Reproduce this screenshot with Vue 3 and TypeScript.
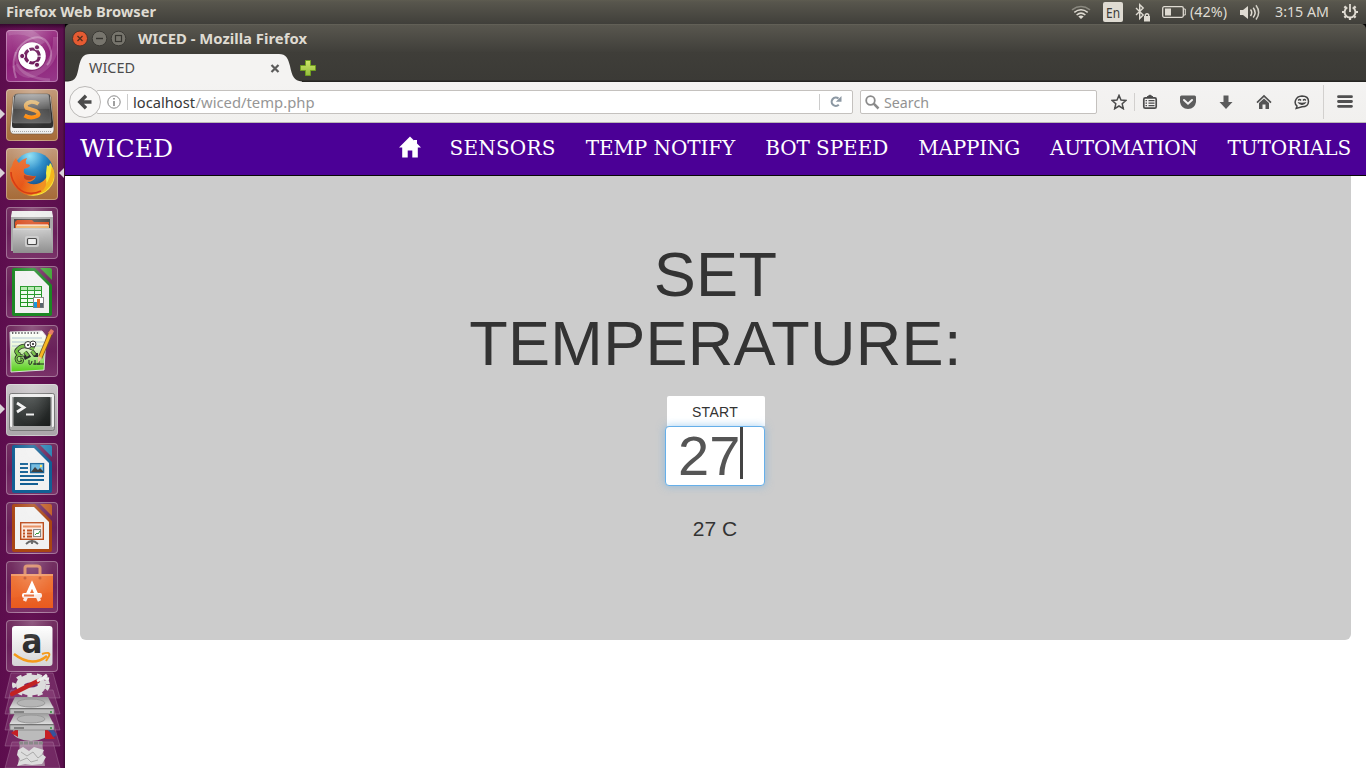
<script setup lang="ts">
import { ref } from 'vue'

interface Tile {
  id: string
  bg: string
  running?: boolean
  focused?: boolean
}

interface NavLink {
  label: string
  tracking: number
}

const tiles: Tile[] = [
  { id: 'dash', bg: 'dash' },
  { id: 'sublime', bg: 'tan', running: true },
  { id: 'firefox', bg: 'tan', running: true, focused: true },
  { id: 'files', bg: 'clear' },
  { id: 'calc', bg: 'clear' },
  { id: 'notepad', bg: 'clear' },
  { id: 'terminal', bg: 'grey', running: true },
  { id: 'writer', bg: 'clear' },
  { id: 'impress', bg: 'clear' },
  { id: 'software', bg: 'clear' },
  { id: 'amazon', bg: 'clear' },
]

const links: NavLink[] = [
  { label: 'SENSORS', tracking: 0.2 },
  { label: 'TEMP NOTIFY', tracking: -0.08 },
  { label: 'BOT SPEED', tracking: -0.07 },
  { label: 'MAPPING', tracking: -0.2 },
  { label: 'AUTOMATION', tracking: -0.24 },
  { label: 'TUTORIALS', tracking: -0.1 },
]
const temperature = ref<number>(27)
</script>

<template>
  <div class="desktop">
    <header class="panel">
      <svg class="ui bold" width="160" height="24"><text x="6" y="17" textLength="150" lengthAdjust="spacingAndGlyphs">Firefox Web Browser</text></svg>
      <div class="indicators">
        <svg width="20" height="24" viewBox="0 0 20 24" fill="none" stroke="#dfdbd2" stroke-width="1.5">
          <path d="M1 9.8Q10 3.2 19 9.8" opacity=".4" /><path d="M3.3 12.3Q10 7.3 16.7 12.3" /><path d="M5.6 15Q10 11.2 14.4 15" /><path d="M7.3 16.6Q10 14.4 12.7 16.6L10 19Z" fill="#dfdbd2" stroke="none" />
        </svg>
        <span class="lang"><svg class="ui" width="20" height="20"><text x="3" y="15.5" textLength="14" lengthAdjust="spacingAndGlyphs">En</text></svg></span>
        <svg class="bt" width="16" height="24" viewBox="0 0 16 24" fill="none" stroke="#dfdbd2" stroke-width="1.4">
          <path d="M1 8L8.2 15L4.7 18.5V4.7L8.2 8L1 15" /><rect x="9" y="16" width="6" height="5.5" fill="#dfdbd2" stroke="none" /><path d="M10.3 16V14.7Q12 12.7 13.7 14.7V16" />
        </svg>
        <svg class="battery" width="24" height="24" viewBox="0 0 24 24">
          <rect x=".7" y="6.7" width="20.6" height="10.6" rx="1.5" fill="none" stroke="#dfdbd2" stroke-width="1.3" /><rect x="3" y="8.5" width="6" height="7" fill="#dfdbd2" /><path d="M21.5 9H23.3V15H21.5" fill="none" stroke="#dfdbd2" />
        </svg>
        <svg class="ui percent" width="38" height="24"><text x="0" y="17" textLength="37" lengthAdjust="spacingAndGlyphs">(42%)</text></svg>
        <svg class="volume" width="22" height="24" viewBox="0 0 22 24" fill="none" stroke="#dfdbd2" stroke-width="1.5">
          <path d="M1 10H4L9 6V19L4 15H1Z" fill="#dfdbd2" stroke="none" /><path d="M11.5 9.5Q14 12.5 11.5 16" /><path d="M14.2 7.7Q18 12.5 14.2 17.5" /><path d="M17 5.2Q22.3 12.5 17 19.5" opacity=".9" />
        </svg>
        <svg class="ui clock" width="55" height="24"><text x="0" y="17" textLength="54" lengthAdjust="spacingAndGlyphs">3:15 AM</text></svg>
        <svg class="session" width="18" height="24" viewBox="0 0 18 24" fill="none" stroke="#dfdbd2">
          <path d="M6.3 7.4A5.4 5.4 0 1 0 11.7 7.4" stroke-width="1.9" /><path d="M9 4V12" stroke-width="1.8" /><path d="M3.4 6.4L5 8M14.6 6.4L13 8M1 12H3.5M14.5 12H17M3.4 17.6L5 16M14.6 17.6L13 16M9 17.5V20" stroke-width="2.2" />
        </svg>
      </div>
    </header>

    <div class="workspace">
      <aside class="launcher">
        <div v-for="tile in tiles" :key="tile.id" class="slot">
          <i v-if="tile.running" class="pip left"></i>
          <i v-if="tile.focused" class="pip right"></i>
          <div class="tile" :class="tile.bg">
            <svg v-if="tile.id === 'dash'" width="52" height="52" viewBox="0 0 52 52">
              <g fill="none" stroke="#fff"><path d="M10 48Q2 24 20 11Q39 0 45 21Q46 30 41 35" stroke-width="2" opacity=".28" /><path d="M2 2Q26 -3 36 14" stroke-width="7" opacity=".13" /><path d="M50 7Q51 33 30 43Q17 49 9 35" stroke-width="6" opacity=".13" /><path d="M10 22Q9 39 23 45Q31 49 44 50" stroke-width="3" opacity=".16" /></g>
              <circle cx="26" cy="26.5" r="14.5" fill="#611050" opacity=".35" /><circle cx="26" cy="26" r="13.8" fill="#fff" />
              <circle cx="26.3" cy="26" r="7" fill="none" stroke="#6b1458" stroke-width="3.2" stroke-dasharray="13.2 1.46" stroke-dashoffset="-.7" />
              <g fill="#6b1458" stroke="#fff" stroke-width="1"><circle cx="16.2" cy="26" r="2.6" /><circle cx="31" cy="17.3" r="2.6" /><circle cx="31" cy="34.8" r="2.6" /></g>
            </svg>

            <svg v-else-if="tile.id === 'sublime'" width="52" height="52" viewBox="0 0 52 52">
              <defs><linearGradient id="slKey" x2="0" y2="1"><stop stop-color="#a4a4a4" /><stop offset=".5" stop-color="#5c5c5c" /><stop offset=".51" stop-color="#484848" /><stop offset="1" stop-color="#626262" /></linearGradient><linearGradient id="slS" x2="0" y2="1"><stop stop-color="#ddb878" /><stop offset="1" stop-color="#ff8500" /></linearGradient></defs>
              <path d="M7 8Q8 5 11 5H41Q44 5 45 8L48 40Q48 45 44 45H8Q4 45 4 40Z" fill="#efefef" stroke="#6b543e" stroke-width=".6" /><path d="M6 42.5H46" stroke="#aaa" stroke-dasharray="1 1" />
              <path d="M8 7Q9 5 12 5H41Q44 5 44 7L47 33V37Q47 39 45 39H8Q6 39 6 37V33Z" fill="#303030" /><path d="M9 7Q10 5 12 5H41Q43 5 43 7L45 33Q45 34 43 34H9Q6 34 6 32Z" fill="url(#slKey)" stroke="#777" stroke-width=".5" />
              <path d="M32.5 15Q29 12.5 24.5 13Q18 14.5 20.5 18.8L30 22Q35 25 30.5 27.3Q24.5 30 18.5 26.5" fill="none" stroke="url(#slS)" stroke-width="3.9" />
            </svg>

            <svg v-else-if="tile.id === 'firefox'" width="52" height="52" viewBox="0 0 52 52">
              <defs><radialGradient id="ffGlobe" cx=".4" cy=".1" r=".9"><stop stop-color="#7ddcf4" /><stop offset=".4" stop-color="#1e86c6" /><stop offset="1" stop-color="#093b77" /></radialGradient><linearGradient id="ffFox" x2="1" y2=".5"><stop stop-color="#ef7530" /><stop offset=".55" stop-color="#e85718" /><stop offset="1" stop-color="#f19222" /></linearGradient></defs>
              <circle cx="27.5" cy="24" r="20" fill="url(#ffGlobe)" />
              <path d="M41 17Q43 20 44 15Q46 16 46 19Q52 31 43 41Q34 50 21 47Q35 44 38 36Q41 31 40 25Z" fill="#f7e83d" /><path d="M46 18Q50 25 47 33Q42 45 29 47Q41 38 44 28Z" fill="#f4b71d" />
              <path d="M6 18Q7 13 10 10Q11 13 13 15Q16 11 21 10Q19 13 20 16Q24 16 24 18Q22 20 18 21Q17 24 19 26Q23 28 30 28Q28 34 21 34Q26 38 34 35Q38 33 40 30Q42 39 35 44Q24 51 13 43Q2 34 4 21Z" fill="url(#ffFox)" /><path d="M18 27Q23 29 30 28Q27 33 21 32Q17 31 18 27Z" fill="#b83a18" /><path d="M5 24Q5 32 12 40Q22 49 35 43" fill="none" stroke="#d63d15" stroke-width="1.6" />
            </svg>

            <svg v-else-if="tile.id === 'files'" width="52" height="52" viewBox="0 0 52 52">
              <defs><linearGradient id="cabinet" x2="0" y2="1"><stop stop-color="#c9c9c9" /><stop offset="1" stop-color="#8f8f8f" /></linearGradient></defs>
              <path d="M7 4H45L47 10V44H5V10Z" fill="#aaa" /><path d="M6 4H46L47 10H5Z" fill="#ededed" /><rect x="8" y="12" width="36" height="11" fill="#4a4a4a" /><path d="M11 13H26L28 15H43V23H9V15Z" fill="#d94f20" /><path d="M10 18H43V23H10Z" fill="#efb46c" /><path d="M11 18H42" stroke="#fff" /><path d="M8 21H44V45H8Z" fill="#aaa" /><path d="M7 22H45L47 46H7Z" fill="url(#cabinet)" /><path d="M7 22H45" stroke="#dedede" />
              <rect x="19" y="29" width="14" height="11" rx="2" fill="#ccc" /><rect x="21.5" y="31.5" width="9" height="6" rx="1" fill="#eee" stroke="#444" stroke-width="1.2" />
            </svg>

            <svg v-else-if="tile.id === 'calc' || tile.id === 'writer' || tile.id === 'impress'" width="52" height="52" viewBox="0 0 52 52" :class="tile.id">
              <path class="shell" d="M8 2H29L46 19V48Q46 50 44 50H8Q6 50 6 48V4Q6 2 8 2Z" /><path d="M9 5H28L43 20V47H9Z" fill="#f1f1f1" /><path class="fold" d="M34 2H44Q46 2 46 4V14Z" />
              <template v-if="tile.id === 'calc'">
                <rect x="14" y="20" width="22" height="21" fill="#1d9420" /><g fill="#b5eaaf"><rect x="15" y="21" width="6" height="3" /><rect x="22" y="21" width="6" height="3" /><rect x="29" y="21" width="6" height="3" /></g><path d="M15 26.5H21M22 26.5H28M29 26.5H35M15 30.5H21M22 30.5H28M29 30.5H35M15 34.5H21M22 34.5H28M15 38.5H21M22 38.5H28" stroke="#effbee" stroke-width="2.8" />
                <rect x="27.5" y="31.5" width="10" height="10" fill="#fff" stroke="#838383" /><rect x="28" y="36" width="3" height="5.5" fill="#1598dc" /><rect x="31" y="33" width="3" height="8.5" fill="#e66a18" /><rect x="34" y="37" width="3" height="4.5" fill="#57656c" />
              </template>
              <template v-else-if="tile.id === 'writer'">
                <path d="M14 21H22M14 25H22M14 29H22M14 33H38M14 37H38M14 41H32" stroke="#125f94" stroke-width="2" /><rect x="24.6" y="20.6" width="13" height="9" fill="#69b7df" stroke="#125f94" stroke-width="1.3" /><path d="M25 29L29 24L32 27L34 25L37 28V29Z" fill="#333" /><circle cx="35" cy="23" r="1.2" fill="#ffe458" />
              </template>
              <template v-else>
                <rect x="14.7" y="20.7" width="22.6" height="16.6" fill="#fbe9df" stroke="#b94818" stroke-width="1.4" /><path d="M17 24.5H35" stroke="#e78a59" stroke-width="2" /><path d="M17 28.5H19M21 28.5H26M17 31.5H19M21 31.5H26M17 34.5H19M21 34.5H26" stroke="#b94818" stroke-width="2" /><rect x="27.6" y="27.6" width="7" height="7" fill="#fff" stroke="#777" /><path d="M29 33L31 31L32 32L34 29" fill="none" stroke="#289632" /><path d="M20 42Q26 36 32 42M26 38V42" fill="none" stroke="#666" stroke-width="1.8" />
              </template>
            </svg>

            <svg v-else-if="tile.id === 'notepad'" width="52" height="52" viewBox="0 0 52 52">
              <defs><linearGradient id="npPage" x2="0" y2="1"><stop stop-color="#fff" /><stop offset=".35" stop-color="#eef9db" /><stop offset="1" stop-color="#53cd17" /></linearGradient></defs>
              <path d="M4 7L36 6L40 11L38 45L5 47Z" fill="url(#npPage)" stroke="#ddd" /><path d="M6 13H36M6 17H38M6 21H38" stroke="#abc2d1" /><path d="M6 8H34" stroke="#666" stroke-width="2" stroke-dasharray="1.4 1.7" />
              <path d="M28 24Q17 18 12 24Q8 27 14 30M19 27L22 31L18 33M26 26L29 30H32" fill="none" stroke="#222" stroke-width="4.2" /><path d="M17 31Q10 29 10 34Q11 39 16 37Q18 34 14 34" fill="none" stroke="#222" stroke-width="2.8" /><path d="M28 24Q17 18 12 24Q8 27 14 30M19 27L22 31M26 26L29 30" fill="none" stroke="#70bd40" stroke-width="2.8" /><path d="M17 31Q10 29 10 34Q11 39 16 37Q18 34 14 34" fill="none" stroke="#70bd40" stroke-width="1.4" /><g fill="#fff" stroke="#222"><circle cx="22" cy="20" r="3.5" /><circle cx="27" cy="19" r="3" /></g><circle cx="22" cy="20" r="1" /><circle cx="27" cy="19" r="1" />
              <path d="M23 35V39Q25 41 26 36M29 35V40M27 39H32M33 36V40M31 39H38" stroke="#222" fill="none" /><path d="M45 7L34 33" stroke="#72501b" stroke-width="4.5" /><path d="M45 7L34 33" stroke="#f7b51a" stroke-width="3" /><path d="M45 4L48 6L46 10L42 8Z" fill="#e57b68" /><path d="M32 31L36 33L32 38Z" fill="#e4c89b" />
            </svg>

            <svg v-else-if="tile.id === 'terminal'" width="52" height="52" viewBox="0 0 52 52">
              <defs><linearGradient id="termScreen" x2="1" y2="1"><stop stop-color="#464c4b" /><stop offset=".5" stop-color="#303433" /><stop offset="1" stop-color="#191c1b" /></linearGradient></defs>
              <rect x="3.5" y="9.5" width="45" height="37" rx="2" fill="#aaa" stroke="#777" /><rect x="4" y="10" width="44" height="33" rx="1.5" fill="#eee" /><rect x="6" y="13" width="40" height="30" fill="#aaa" /><rect x="7.5" y="13" width="37" height="29" rx="1" fill="url(#termScreen)" /><path d="M11 19L18 23.5L11 28" fill="none" stroke="#f3f3f3" stroke-width="2.7" /><path d="M20 30.5H28" stroke="#eee" stroke-width="2" />
            </svg>

            <svg v-else-if="tile.id === 'software'" width="52" height="52" viewBox="0 0 52 52">
              <defs><linearGradient id="swBag" x2="0" y2="1"><stop stop-color="#ee793d" /><stop offset="1" stop-color="#ec5d20" /></linearGradient></defs>
              <path d="M19 16V7Q19 5 21 5H31Q34 5 34 7V16" fill="none" stroke="#d98762" stroke-width="3" /><path d="M5 13H47V47H5Z" fill="url(#swBag)" /><path d="M5 13H47V15H5Z" fill="#f19a68" /><g fill="#c0522b"><circle cx="19" cy="17" r="1.5" /><circle cx="34" cy="17" r="1.5" /></g><path d="M18.5 40L26 23.5L33.5 40" fill="none" stroke="#fff" stroke-width="3.5" /><rect x="16" y="32" width="20" height="5" rx="2" fill="#fff" /><path d="M18 34.5H28" stroke="#e97442" stroke-width="2" /><path d="M5 37L47 31V47H5Z" fill="#d84a19" opacity=".12" />
            </svg>

            <svg v-else width="52" height="52" viewBox="0 0 52 52">
              <defs><linearGradient id="amazonCard" x2="0" y2="1"><stop stop-color="#fff" /><stop offset="1" stop-color="#d5d5d5" /></linearGradient></defs>
              <rect x="6" y="6" width="40.5" height="40" rx="3" fill="url(#amazonCard)" /><text x="15.5" y="33" class="amazon-a" textLength="21" lengthAdjust="spacingAndGlyphs">a</text><path d="M8 34Q26 48 41 36" fill="none" stroke="#f59a1a" stroke-width="2.5" /><path d="M36 34Q45 31 43 36L40 41" fill="none" stroke="#f59a1a" stroke-width="2" />
            </svg>
            <span class="sheen"></span>
          </div>
        </div>
        <svg class="stack" width="65" height="96" viewBox="0 0 65 96">
          <defs><linearGradient id="drive" x2="0" y2="1"><stop stop-color="#999" /><stop offset=".65" stop-color="#ddd" /><stop offset=".67" stop-color="#777" /><stop offset="1" stop-color="#aaa" /></linearGradient></defs>
          <g fill="#a56594" fill-opacity=".3" stroke="#b184a7" stroke-opacity=".4"><path d="M11 1H53L60 26H5Z" /><path d="M11 18H53L60 42H5Z" /><path d="M11 34H53L60 58H5Z" /><path d="M11 50H53L60 74H5Z" /><path d="M12 70H53L60 96H5Z" /></g>
          <ellipse cx="31" cy="13" rx="11" ry="6.5" fill="none" stroke="#dcdcdc" stroke-width="8" /><ellipse cx="31" cy="13" rx="17" ry="10" fill="none" stroke="#dcdcdc" stroke-width="4" stroke-dasharray="5 5" /><path d="M12 22L38 9" stroke="#c22222" stroke-width="4.2" stroke-linecap="round" /><path d="M37 9L43 6L47 3M43 6L49 7" fill="none" stroke="#eee" stroke-width="3" />
          <ellipse cx="31" cy="60" rx="18" ry="9" fill="#bbb" /><path d="M11 61L18 56V65ZM45 54L55 67H45Z" fill="#c61e24" /><path d="M46 54L52 59L55 64" fill="none" stroke="#35529c" stroke-width="4" />
          <g><path d="M15 25H48L54 37L51 42H11L9 37Z" fill="url(#drive)" /><path d="M10 37H54V42H10Z" fill="#bebebe" stroke="#666" stroke-width=".5" /><ellipse cx="31" cy="31" rx="14" ry="4" fill="#b5b5b5" stroke="#999" /><path d="M14 40H24" stroke="#444" /><circle cx="51" cy="40" r="1" fill="#2d9138" /></g>
          <g><path d="M15 41H48L54 53L51 58H11L9 53Z" fill="url(#drive)" /><path d="M10 53H54V58H10Z" fill="#bebebe" stroke="#666" stroke-width=".5" /><ellipse cx="31" cy="47" rx="14" ry="4" fill="#b5b5b5" stroke="#999" /><path d="M14 56H24" stroke="#444" /><circle cx="51" cy="56" r="1" fill="#2d9138" /></g>
          <path d="M20 69H42L45 94H18Z" fill="#c9c9c9" opacity=".6" /><path d="M19 71H43" stroke="#888" stroke-width="3" stroke-dasharray="4 1" /><path d="M18 78L23 75L29 79L34 75L44 78L42 82L46 85L42 92L32 93L25 92L17 94L20 87L17 83Z" fill="#ddd" /><path d="M21 80L27 84L33 80L38 86L43 82M20 89L27 86L31 90L38 88" fill="none" stroke="#aaa" />
        </svg>
      </aside>

      <main class="window">
        <div class="titlebar">
          <svg width="56" height="28" viewBox="0 0 56 28">
            <circle cx="8" cy="14.5" r="7.5" fill="#e65b32" stroke="#47342c" /><path d="M5.5 12L10.5 17M10.5 12L5.5 17" stroke="#54301f" stroke-width="1.3" />
            <g fill="#77756d" stroke="#3a3934"><circle cx="27.5" cy="14.5" r="7.3" /><circle cx="46.5" cy="14.5" r="7.3" /></g><path d="M24 14.5H31" stroke="#35342f" stroke-width="1.4" /><rect x="43.5" y="11.5" width="6" height="6" fill="none" stroke="#35342f" stroke-width="1.2" />
          </svg>
          <svg class="ui bold wtitle" width="180" height="28"><text x="0" y="20" textLength="169" lengthAdjust="spacingAndGlyphs">WICED - Mozilla Firefox</text></svg>
        </div>
        <div class="tabs">
          <svg width="270" height="30" viewBox="0 0 270 30">
            <path d="M0 30V29.5H3C11 29 12 24 14 14C16 6 18 2 25 2H214C221 2 223 6 225 14C227 24 229 29 237 29.5V30Z" fill="#f4f3f2" />
            <text x="24" y="21" class="tab-title" textLength="46" lengthAdjust="spacingAndGlyphs">WICED</text><path d="M206.5 13L213.5 20M213.5 13L206.5 20" stroke="#5b5b5b" stroke-width="2.2" />
            <defs><linearGradient id="plus" x2="0" y2="1"><stop stop-color="#cfe66a" /><stop offset="1" stop-color="#93bd3c" /></linearGradient></defs>
            <path d="M240.5 8.5H245.5V13.5H250.5V18.5H245.5V23.5H240.5V18.5H235.5V13.5H240.5Z" fill="url(#plus)" stroke="#6f9d20" />
          </svg>
        </div>
        <div class="toolbar">
          <div class="back"><svg width="32" height="32" viewBox="0 0 32 32"><circle cx="16" cy="16" r="15.5" fill="#f7f6f5" stroke="#bbb9b7" /><path d="M22.5 16H12M17 9.8L10.8 16L17 22.2" fill="none" stroke="#4b4b4b" stroke-width="3.4" /></svg></div>
          <div class="address">
            <svg class="info" width="14" height="14" viewBox="0 0 14 14" fill="none" stroke="#888"><circle cx="7" cy="7" r="6.2" /><path d="M7 6V11M7 3V4.5" stroke-width="1.6" /></svg>
            <i class="rule"></i>
            <svg class="ui url" width="186" height="22"><text x="0" y="17" fill="#383838" textLength="62" lengthAdjust="spacingAndGlyphs">localhost</text><text x="62.5" y="17" fill="#969696" textLength="119" lengthAdjust="spacingAndGlyphs">/wiced/temp.php</text></svg>
            <i class="rule reload-rule"></i>
            <svg class="reload" width="14" height="14" viewBox="0 0 14 14"><path d="M9.8 9.8A4.2 4.2 0 1 1 9.5 3.5" fill="none" stroke="#8c98a3" stroke-width="2.1" /><path d="M12.5 1V6.8H6.8Z" fill="#8c98a3" /></svg>
          </div>
          <div class="search">
            <svg width="15" height="15" viewBox="0 0 15 15" fill="none" stroke="#8a8a8a"><circle cx="5.5" cy="5.5" r="4.3" stroke-width="1.8" /><path d="M8.7 8.7L13.5 13.5" stroke-width="2.5" /></svg>
            <svg class="ui stext" width="50" height="22"><text x="0" y="17" textLength="45" lengthAdjust="spacingAndGlyphs">Search</text></svg>
          </div>
          <div class="tools">
            <svg width="16" height="16" viewBox="0 0 16 16"><path d="M8 1.4L10 6L15 6.4L11.2 9.8L12.3 14.7L8 12L3.7 14.7L4.8 9.8L1 6.4L6 6Z" fill="none" stroke="#4b4b4b" stroke-width="1.5" /></svg>
            <i class="short-line"></i>
            <svg width="16" height="16" viewBox="0 0 16 16"><rect x="1.8" y="3.8" width="12.4" height="10.4" rx="1.5" fill="none" stroke="#4b4b4b" stroke-width="1.7" /><path d="M5 3L8 1L11 3Z" fill="#4b4b4b" stroke="#4b4b4b" /><path d="M3.5 6.7H5M6.5 6.7H12.5M3.5 9.2H5M6.5 9.2H12.5M3.5 11.7H5M6.5 11.7H12.5" stroke="#4b4b4b" stroke-width="1.2" /></svg>
            <svg width="16" height="16" viewBox="0 0 16 16"><path d="M1.5 1.5H14.5Q16 1.5 16 3V8Q15 14.5 8 15Q1 14.5 0 8V3Q0 1.5 1.5 1.5Z" fill="#5d5d5d" /><path d="M4 6L8 9.7L12 6" fill="none" stroke="#f4f3f2" stroke-width="2" stroke-linecap="round" /></svg>
            <svg width="16" height="16" viewBox="0 0 16 16"><path d="M5.5 1.5H10.5V8H14.5L8 15L1.5 8H5.5Z" fill="#5b5b5b" /></svg>
            <svg width="16" height="16" viewBox="0 0 16 16"><path d="M1 8.7L8 2L15 8.7" fill="none" stroke="#505050" stroke-width="1.7" /><path d="M3 9L8 4.5L13 9V15H9.5V10.5H6.5V15H3Z" fill="#555" /></svg>
            <svg width="16" height="16" viewBox="0 0 16 16"><path d="M3 12Q.3 10 1.5 6.5Q3 2.2 8 2Q14.5 2.1 14.5 7.5Q14.3 12.8 8 12.8L2.2 14.5Z" fill="none" stroke="#444" stroke-width="1.5" /><path d="M4.2 6.5Q5.6 4.5 7 6.5M9 6.5Q10.4 4.5 11.8 6.5" fill="none" stroke="#444" stroke-width="1.4" /><path d="M3.5 8Q8 9.3 12.5 8Q11 11.2 8 11Q5 11.2 3.5 8Z" fill="#444" /></svg>
            <i class="tall-line"></i>
            <svg width="16" height="16" viewBox="0 0 16 16"><path d="M1.5 2.7H14.5M1.5 7.5H14.5M1.5 12.3H14.5" stroke="#505050" stroke-width="2.8" stroke-linecap="round" /></svg>
          </div>
        </div>

        <div class="page">
          <nav class="navbar">
            <a class="brand">WICED</a>
            <div class="links">
              <svg width="22" height="22" viewBox="0 0 22 22"><path d="M11 .5L15 4.5V4H18V7.5L22 11.5H18.8V21.5H13.3V14.5H8.7V21.5H3.2V11.5H0Z" fill="#fff" /></svg>
              <a v-for="link in links" :key="link.label" :style="{ letterSpacing: link.tracking + 'px' }">{{ link.label }}</a>
            </div>
          </nav>
          <section class="jumbotron">
            <h1>SET<br>TEMPERATURE:</h1>
            <button class="start" type="button">START</button>
            <div class="field"><span>{{ temperature }}</span><i class="caret"></i></div>
            <p>{{ temperature }} C</p>
          </section>
        </div>
      </main>
    </div>
  </div>
</template>

<style>
body { margin: 0; overflow: hidden; background: #fff; }
</style>

<style scoped>
* { box-sizing: border-box; }
svg { display: block; flex: none; }
.desktop { width: 1366px; height: 768px; overflow: hidden; display: flex; flex-direction: column; background: #000; }
.ui { font: 14.5px "Noto Sans", sans-serif; fill: #dfdbd2; }
.bold { font-weight: 700; font-size: 14px; }
.panel { height: 24px; flex: none; display: flex; justify-content: space-between; background: linear-gradient(#5e5c50 0, #58564d 2px, #403f3a 24px); }
.indicators { display: flex; padding-right: 7px; }
.lang { width: 20px; height: 20px; margin: 2px 0 0 12px; border-radius: 2px; background: #dfdbd2; }
.lang .ui { fill: #3c3b37; font-size: 13.5px; }
.bt { margin-left: 12px; }
.battery { margin-left: 11px; }
.percent { margin-left: 4px; }
.volume { margin-left: 11px; }
.clock { margin-left: 14px; }
.session { margin-left: 11px; }
.workspace { flex: 1; display: flex; min-height: 0; }
.launcher { width: 65px; flex: none; padding-top: 6px; background: linear-gradient(rgba(20,0,18,.55), transparent 5px), linear-gradient(90deg, #5c0d4d, #641253 45%, #5b0f4d 96%, #3e0a35); }
.slot { height: 59px; padding-left: 6px; position: relative; }
.tile { width: 52px; height: 52px; border-radius: 4px; position: relative; overflow: hidden; box-shadow: inset 0 0 0 1px rgba(255,255,255,.18); }
.sheen { position: absolute; inset: 0; border-radius: 4px; border: 1px solid rgba(255,255,255,.17); background: radial-gradient(ellipse at 50% 0, rgba(255,255,255,.2), transparent 60%); }
.dash { background: linear-gradient(160deg, #ac5299, #8f1f78 50%, #96398a); }
.tan { background: linear-gradient(#c39b7b, #b38156 45%, #a66b38); }
.grey { background: linear-gradient(#c9c5c8, #aaa5a9); }
.clear { background: linear-gradient(#743162, #69205a 50%, #7a3269); }
.pip { position: absolute; top: 20px; width: 0; height: 0; border: 5px solid transparent; }
.pip.left { left: 0; border-left: 5px solid #d9d2d7; border-right: 0; }
.pip.right { right: 1px; border-right: 5px solid #d9d2d7; border-left: 0; }
.calc .shell { fill: #1c8724; } .calc .fold { fill: #47a83d; }
.writer .shell { fill: #125f94; } .writer .fold { fill: #2f86b6; }
.impress .shell { fill: #a94513; } .impress .fold { fill: #c2622c; }
.amazon-a { font: bold 34px "DejaVu Sans", sans-serif; fill: #202020; }
.stack { margin-top: -7px; }
.window { flex: 1; min-width: 0; display: flex; flex-direction: column; }
.titlebar { height: 28px; flex: none; display: flex; padding-left: 7px; border-radius: 5px 5px 0 0; background: linear-gradient(#6a685e 0, #59574f 1px, #403f3a 28px); }
.wtitle { margin-left: 10px; }
.tabs { height: 30px; flex: none; background: linear-gradient(#3f3e39, #3b3a36 28px, #252421 29px); }
.tab-title { font: 14px "Noto Sans", sans-serif; fill: #4c4c4c; }
.toolbar { height: 41px; flex: none; display: flex; align-items: flex-start; padding: 8px 13px 0 4px; background: linear-gradient(#f4f3f2, #f1f0ee); border-bottom: 1px solid #bbb8b5; }
.back { width: 32px; height: 32px; margin-top: -4px; z-index: 1; }
.address { width: 757px; height: 24px; margin-left: -5px; padding-left: 10px; display: flex; align-items: center; background: #fff; border: 1px solid #c4c1be; border-radius: 2px; }
.rule { width: 1px; height: 16px; margin-left: 6px; background: #ccc; }
.url { margin-left: 5px; }
.url text { font-size: 14.5px; }
.reload-rule { margin-left: 500px; }
.reload { margin-left: 9px; }
.search { width: 237px; height: 24px; margin-left: 7px; padding-left: 4px; display: flex; align-items: center; background: #fff; border: 1px solid #c4c1be; border-radius: 2px; }
.stext { margin-left: 4px; fill: #929292; font-size: 14px; }
.tools { flex: 1; display: flex; justify-content: space-between; align-items: center; height: 24px; margin-left: 14px; }
.short-line { width: 1px; height: 18px; margin: 0 -15px 0 -15px; background: #d2d0ce; }
.tall-line { width: 1px; height: 34px; margin: 0 -9px 0 -9px; background: #d2d0ce; }
.page { flex: 1; background: #fff; display: flex; flex-direction: column; align-items: center; }
.navbar { width: 100%; height: 53px; flex: none; padding: 0 15px; display: flex; justify-content: space-between; background: #4b0096; border-bottom: 1px solid #080808; color: #fff; font-family: "DejaVu Serif", serif; }
.brand { font-size: 25px; line-height: 52px; }
.links { display: flex; gap: 30px; font-size: 20px; line-height: 51px; white-space: nowrap; }
.links svg { margin: 13px -1px 0 0; }
.jumbotron { width: 1271px; height: 464px; padding-top: 64px; display: flex; flex-direction: column; align-items: center; background: #ccc; border-radius: 0 0 6px 6px; color: #333; font-family: "Liberation Sans", Arial, sans-serif; }
h1 { margin: 0; font-size: 63px; font-weight: 400; line-height: 69.3px; letter-spacing: .3px; text-align: center; }
.start { width: 98px; height: 30px; margin: 17.4px 0 0 1px; padding: 0 2px 0 0; border: 0; border-radius: 2px 2px 0 0; background: #fff; color: #333; font: 14px "Liberation Sans", Arial, sans-serif; line-height: 32px; letter-spacing: .3px; }
.field { width: 100px; height: 60px; margin-left: -1px; padding-left: 12px; display: flex; background: #fff; border: 1px solid #66afe9; border-radius: 4px; box-shadow: 0 0 8px rgba(102,175,233,.6); color: #555; font-size: 56px; line-height: 58px; }
.caret { width: 3px; height: 52px; background: #444; }
p { margin: 28px 0 0 -1px; font-size: 21px; line-height: 30px; }
</style>
